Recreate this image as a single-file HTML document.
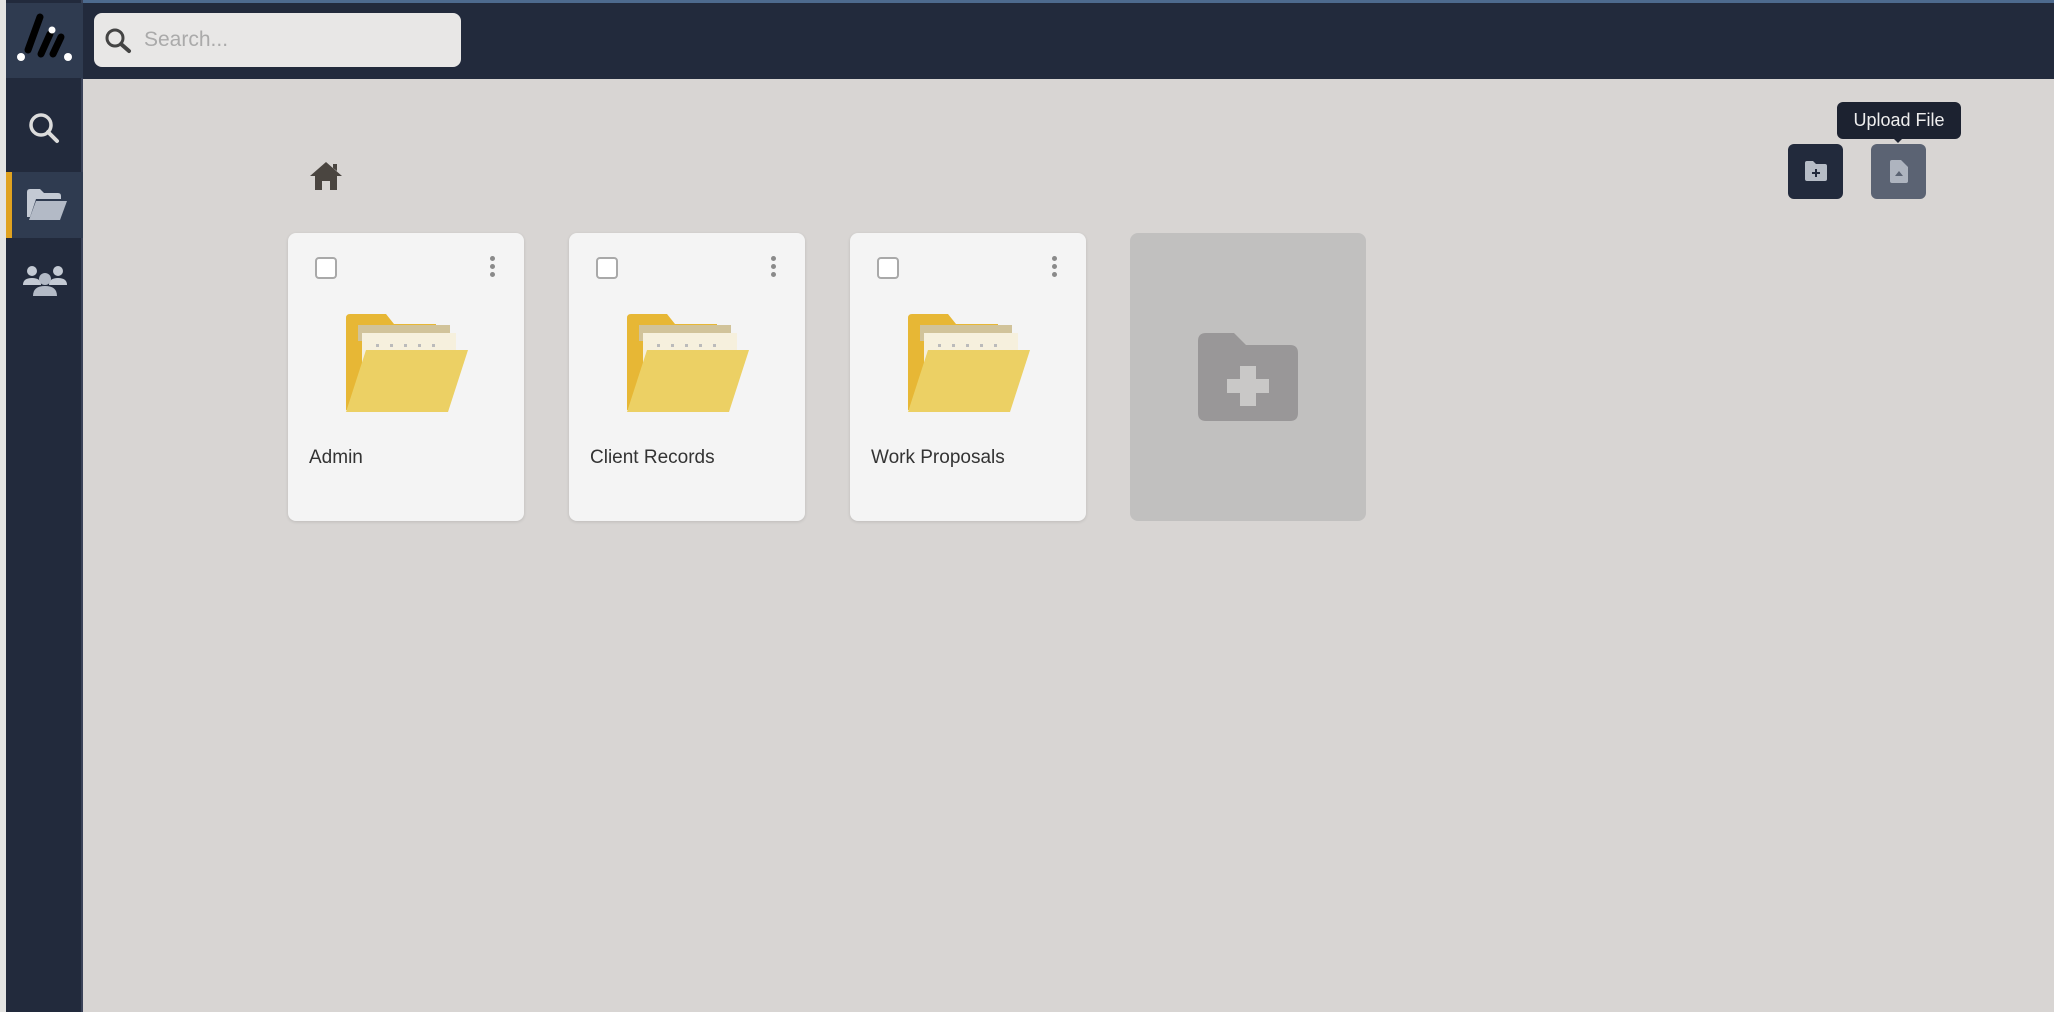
<!DOCTYPE html>
<html><head><meta charset="utf-8"><style>
*{margin:0;padding:0;box-sizing:border-box}
body{width:2054px;height:1012px;overflow:hidden;background:#d8d5d3;font-family:"Liberation Sans",sans-serif;position:relative}
.abs{position:absolute}
.card{position:absolute;top:233px;width:236px;height:288px;background:#f4f4f4;border-radius:8px;box-shadow:0 1px 3px rgba(0,0,0,.12)}
.cb{position:absolute;left:27px;top:24px;width:22px;height:22px;border:2px solid #a9a9a9;border-radius:4px;background:#fff}
.dots{position:absolute;left:202px;top:23px;width:6px}
.dots i{display:block;width:5px;height:5px;border-radius:50%;background:#8a8a8a;margin-bottom:3px}
.fold{position:absolute;left:58px;top:81px}
.lbl{position:absolute;left:21px;top:214px;font-size:19px;color:#333}
</style></head><body>
<div class="abs" style="left:0;top:0;width:6px;height:1012px;background:#e4e4e2"></div>
<div class="abs" style="left:6px;top:0;width:2048px;height:79px;background:#222a3c;border-top:3px solid #4d6a8e"></div>
<div class="abs" style="left:6px;top:0;width:77px;height:1012px;background:#222a3c;border-right:2px solid #3a4258"></div>
<div class="abs" style="left:6px;top:3px;width:77px;height:75px;background:#2f3b50"></div>
<svg class="abs" style="left:14px;top:10px" width="60" height="56" viewBox="0 0 60 56">
<g stroke="#000" stroke-width="7" stroke-linecap="round"><line x1="26" y1="7" x2="14" y2="40"/><line x1="36" y1="24" x2="27" y2="44"/><line x1="47" y1="27" x2="39" y2="44"/></g>
<g fill="#fff"><circle cx="7" cy="47" r="4"/><circle cx="54" cy="47" r="4"/><circle cx="38" cy="20" r="3.5"/></g></svg>
<div class="abs" style="left:94px;top:13px;width:367px;height:54px;background:#e8e7e6;border-radius:8px"></div>
<svg class="abs" style="left:104px;top:27px" width="30" height="28" viewBox="0 0 30 28"><circle cx="11" cy="11" r="8" fill="none" stroke="#444" stroke-width="3"/><line x1="17" y1="17" x2="25" y2="24" stroke="#444" stroke-width="4" stroke-linecap="round"/></svg>
<div class="abs" style="left:144px;top:28px;font-size:21px;color:#aaa">Search...</div>
<svg class="abs" style="left:26px;top:110px" width="36" height="36" viewBox="0 0 36 36"><circle cx="15" cy="15" r="10" fill="none" stroke="#dcdcdc" stroke-width="3.5"/><line x1="22" y1="22" x2="31" y2="31" stroke="#dcdcdc" stroke-width="4" stroke-linecap="round"/></svg>
<div class="abs" style="left:6px;top:172px;width:77px;height:66px;background:#2f3b50;border-left:6px solid #e0a21f"></div>
<svg class="abs" style="left:27px;top:189px" width="40" height="32" viewBox="0 0 40 32"><path d="M0 3 q0-3 3-3 h10 l4 4 h14 q3 0 3 3 v3 H9 L3 28 H0z" fill="#c4cad4"/><path d="M9 12 H40 L33 31 H2z" fill="#b3bac6"/></svg>
<svg class="abs" style="left:23px;top:264px" width="44" height="36" viewBox="0 0 44 36"><g fill="#c4cad4"><circle cx="9" cy="7" r="5"/><circle cx="35" cy="7" r="5"/><path d="M0 21 q0-7 9-7 q9 0 9 7z"/><path d="M26 21 q0-7 9-7 q9 0 9 7z"/></g><circle cx="22" cy="15" r="6" fill="#b3bac6"/><path d="M10 32 q0-10 12-10 q12 0 12 10z" fill="#b3bac6"/></svg>
<svg class="abs" style="left:309px;top:161px" width="34" height="30" viewBox="0 0 34 30"><path d="M17 1 L33 15 H28 V29 H21 V20 H13 V29 H6 V15 H1z M24 3 h4 v7 l-4-3z" fill="#4a4540"/></svg>

<div class="card" style="left:288px"><div class="cb"></div><div class="dots"><i></i><i></i><i></i></div>
<svg class="fold" width="122" height="100" viewBox="0 0 122 100"><path d="M0 4 q0-4 4-4 h36 l8 10 h42 v86 H0z" fill="#e7b735"/><rect x="12" y="11" width="92" height="16" fill="#d1c39a"/><rect x="16" y="19" width="94" height="40" fill="#f6f0dd"/><g fill="#bbb"><rect x="30" y="30" width="3" height="3"/><rect x="44" y="30" width="3" height="3"/><rect x="58" y="30" width="3" height="3"/><rect x="72" y="30" width="3" height="3"/><rect x="86" y="30" width="3" height="3"/></g><path d="M20 36 H122 L102 98 H0z" fill="#ecd064"/></svg>
<div class="lbl">Admin</div></div>

<div class="card" style="left:569px"><div class="cb"></div><div class="dots"><i></i><i></i><i></i></div>
<svg class="fold" width="122" height="100" viewBox="0 0 122 100"><path d="M0 4 q0-4 4-4 h36 l8 10 h42 v86 H0z" fill="#e7b735"/><rect x="12" y="11" width="92" height="16" fill="#d1c39a"/><rect x="16" y="19" width="94" height="40" fill="#f6f0dd"/><g fill="#bbb"><rect x="30" y="30" width="3" height="3"/><rect x="44" y="30" width="3" height="3"/><rect x="58" y="30" width="3" height="3"/><rect x="72" y="30" width="3" height="3"/><rect x="86" y="30" width="3" height="3"/></g><path d="M20 36 H122 L102 98 H0z" fill="#ecd064"/></svg>
<div class="lbl">Client Records</div></div>

<div class="card" style="left:850px"><div class="cb"></div><div class="dots"><i></i><i></i><i></i></div>
<svg class="fold" width="122" height="100" viewBox="0 0 122 100"><path d="M0 4 q0-4 4-4 h36 l8 10 h42 v86 H0z" fill="#e7b735"/><rect x="12" y="11" width="92" height="16" fill="#d1c39a"/><rect x="16" y="19" width="94" height="40" fill="#f6f0dd"/><g fill="#bbb"><rect x="30" y="30" width="3" height="3"/><rect x="44" y="30" width="3" height="3"/><rect x="58" y="30" width="3" height="3"/><rect x="72" y="30" width="3" height="3"/><rect x="86" y="30" width="3" height="3"/></g><path d="M20 36 H122 L102 98 H0z" fill="#ecd064"/></svg>
<div class="lbl">Work Proposals</div></div>

<div class="card" style="left:1130px;width:236px;background:#c1c0bf;box-shadow:none">
<svg class="abs" style="left:68px;top:100px" width="100" height="88" viewBox="0 0 100 88"><path d="M0 8 q0-8 8-8 h28 l12 12 h44 q8 0 8 8 v60 q0 8-8 8 H8 q-8 0-8-8z" fill="#999798"/><path d="M42 33 h16 v13 h13 v14 h-13 v13 h-16 v-13 h-13 v-14 h13z" fill="#c9c8c7"/></svg></div>

<div class="abs" style="left:1788px;top:144px;width:55px;height:55px;background:#222a3c;border-radius:6px"></div>
<svg class="abs" style="left:1805px;top:161px" width="22" height="20" viewBox="0 0 22 20"><path d="M0 2 q0-2 2-2 h6 l3 3 h9 q2 0 2 2 v13 q0 2-2 2 H2 q-2 0-2-2z" fill="#b6bcc6"/><path d="M10 8 h2 v3 h3 v2 h-3 v3 h-2 v-3 h-3 v-2 h3z" fill="#222a3c"/></svg>
<div class="abs" style="left:1871px;top:144px;width:55px;height:55px;background:#5b6373;border-radius:6px"></div>
<svg class="abs" style="left:1890px;top:160px" width="18" height="23" viewBox="0 0 18 23"><path d="M0 2 q0-2 2-2 h9 l7 7 v14 q0 2-2 2 H2 q-2 0-2-2z" fill="#aeb4bf"/><path d="M9 11 l4 5 h-8z" fill="#5b6373"/></svg>
<div class="abs" style="left:1837px;top:102px;width:124px;height:37px;background:#1c2230;border-radius:6px;color:#eee;font-size:18px;text-align:center;line-height:37px">Upload File</div>
<div class="abs" style="left:1893px;top:138px;width:0;height:0;border-left:5px solid transparent;border-right:5px solid transparent;border-top:5px solid #1c2230"></div>
</body></html>
